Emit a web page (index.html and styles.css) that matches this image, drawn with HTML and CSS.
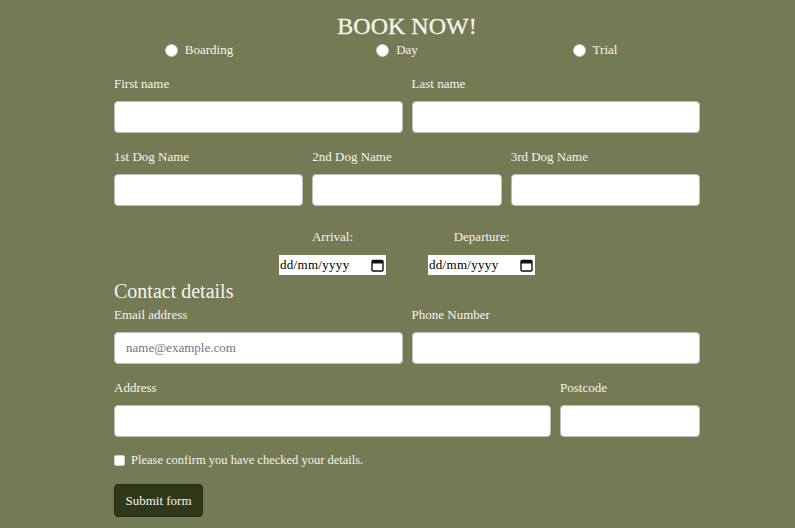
FILE: index.html
```html
<!DOCTYPE html>
<html lang="en">
<head>
<meta charset="utf-8">
<title>Book now</title>
<link rel="stylesheet" href="styles.css">
</head>
<body>
<form class="booking">
  <h1 class="title">BOOK NOW!</h1>
  <div class="types">
    <label class="type"><input type="radio" name="type" class="radio"> Boarding</label>
    <label class="type"><input type="radio" name="type" class="radio"> Day</label>
    <label class="type"><input type="radio" name="type" class="radio"> Trial</label>
  </div>

  <div class="row two">
    <div class="field"><label class="lbl">First name</label><input class="inp" type="text"></div>
    <div class="field"><label class="lbl">Last name</label><input class="inp" type="text"></div>
  </div>

  <div class="row three">
    <div class="field"><label class="lbl">1st Dog Name</label><input class="inp" type="text"></div>
    <div class="field"><label class="lbl">2nd Dog Name</label><input class="inp" type="text"></div>
    <div class="field"><label class="lbl">3rd Dog Name</label><input class="inp" type="text"></div>
  </div>

  <div class="dates">
    <div class="datefield">
      <label class="lbl center">Arrival:</label>
      <div class="date"><input class="dateinp" type="text" placeholder="dd/mm/yyyy"><svg class="cal" width="13" height="13" viewBox="0 0 13 13"><rect x="1" y="1.5" width="11" height="10.5" rx="1" fill="none" stroke="#111" stroke-width="1.4"/><rect x="1" y="1.5" width="11" height="3" fill="#111"/></svg></div>
    </div>
    <div class="datefield">
      <label class="lbl center">Departure:</label>
      <div class="date"><input class="dateinp" type="text" placeholder="dd/mm/yyyy"><svg class="cal" width="13" height="13" viewBox="0 0 13 13"><rect x="1" y="1.5" width="11" height="10.5" rx="1" fill="none" stroke="#111" stroke-width="1.4"/><rect x="1" y="1.5" width="11" height="3" fill="#111"/></svg></div>
    </div>
  </div>

  <h2 class="subtitle">Contact details</h2>
  <div class="row two first">
    <div class="field"><label class="lbl">Email address</label><input class="inp" type="email" placeholder="name@example.com"></div>
    <div class="field"><label class="lbl">Phone Number</label><input class="inp" type="tel"></div>
  </div>

  <div class="row addr">
    <div class="field"><label class="lbl">Address</label><input class="inp" type="text"></div>
    <div class="field"><label class="lbl">Postcode</label><input class="inp" type="text"></div>
  </div>

  <label class="confirm"><input type="checkbox" class="check"> Please confirm you have checked your details.</label>

  <button type="submit" class="btn">Submit form</button>
</form>
</body>
</html>
```
FILE: styles.css
```css
* { box-sizing: border-box; }
html, body { margin: 0; padding: 0; }
body {
  background: #737a54;
  color: #f6f5ee;
  font-family: "Liberation Serif", "DejaVu Serif", serif;
  font-size: 13px;
  height: 528px;
  overflow: hidden;
}
.booking {
  width: 586px;
  margin-left: 114px;
  padding-top: 12px;
}
.title {
  margin: 0;
  font-size: 24px;
  font-weight: normal;
  line-height: 28px;
  text-align: center;
  -webkit-text-stroke: 0.3px #f6f5ee;
}
.types {
  display: grid;
  grid-template-columns: repeat(3, 198px);
  width: 594px;
  margin-left: -14px;
  height: 18px;
  line-height: 20px;
}
.type {
  display: flex;
  align-items: center;
  justify-content: center;
  gap: 7px;
}
.radio {
  appearance: none;
  -webkit-appearance: none;
  width: 13px;
  height: 13px;
  margin: 0;
  border-radius: 50%;
  background: #fff;
  border: 1px solid #c9c9c9;
}
.row {
  display: grid;
  gap: 9px;
  margin-top: 13px;
}
.row.two { grid-template-columns: 1fr 1fr; margin-top: 15px; }
.row.two.first { margin-top: 1px; }
.row.three { grid-template-columns: 1fr 1fr 1fr; }
.row.addr { grid-template-columns: 437px 1fr; }
.field { display: flex; flex-direction: column; }
.lbl {
  display: block;
  line-height: 22px;
  height: 20px;
  margin-bottom: 8px;
}
.lbl.center { text-align: center; line-height: 18px; height: 18px; margin-bottom: 9px; }
.inp {
  width: 100%;
  height: 32px;
  border: 1px solid #bdbdbd;
  border-radius: 4px;
  background: #fff;
  padding: 0 11px;
  font-family: inherit;
  font-size: 13px;
  color: #222;
}
.inp::placeholder { color: #6c757d; }
.dates {
  display: flex;
  justify-content: center;
  gap: 42px;
  margin-top: 22px;
}
.datefield { width: 107px; }
.date {
  height: 20px;
  background: #fff;
  display: flex;
  align-items: center;
  padding: 0 1px 0 1px;
}
.dateinp {
  border: 0;
  outline: 0;
  width: 88px;
  padding: 0;
  margin: 0;
  font-family: inherit;
  font-size: 13px;
  background: transparent;
  color: #000;
}
.dateinp::placeholder { color: #000; letter-spacing: 0.3px; }
.cal { margin-left: auto; margin-right: 1px; }
.subtitle {
  margin: 4px 0 0 0;
  font-size: 20px;
  font-weight: normal;
  line-height: 24px;
}
.confirm {
  display: flex;
  align-items: center;
  gap: 6px;
  height: 20px;
  margin-top: 13px;
  font-size: 12.5px;
}
.check {
  appearance: none;
  -webkit-appearance: none;
  width: 11px;
  height: 11px;
  margin: 0;
  background: #fff;
  border: 1px solid #cfcfcf;
  border-radius: 2px;
}
.btn {
  display: block;
  margin-top: 14px;
  width: 89px;
  height: 33px;
  background: #30381a;
  color: #f6f5ee;
  border: 1px solid #262d12;
  border-radius: 4px;
  font-family: inherit;
  font-size: 13px;
  padding: 0;
}
```
